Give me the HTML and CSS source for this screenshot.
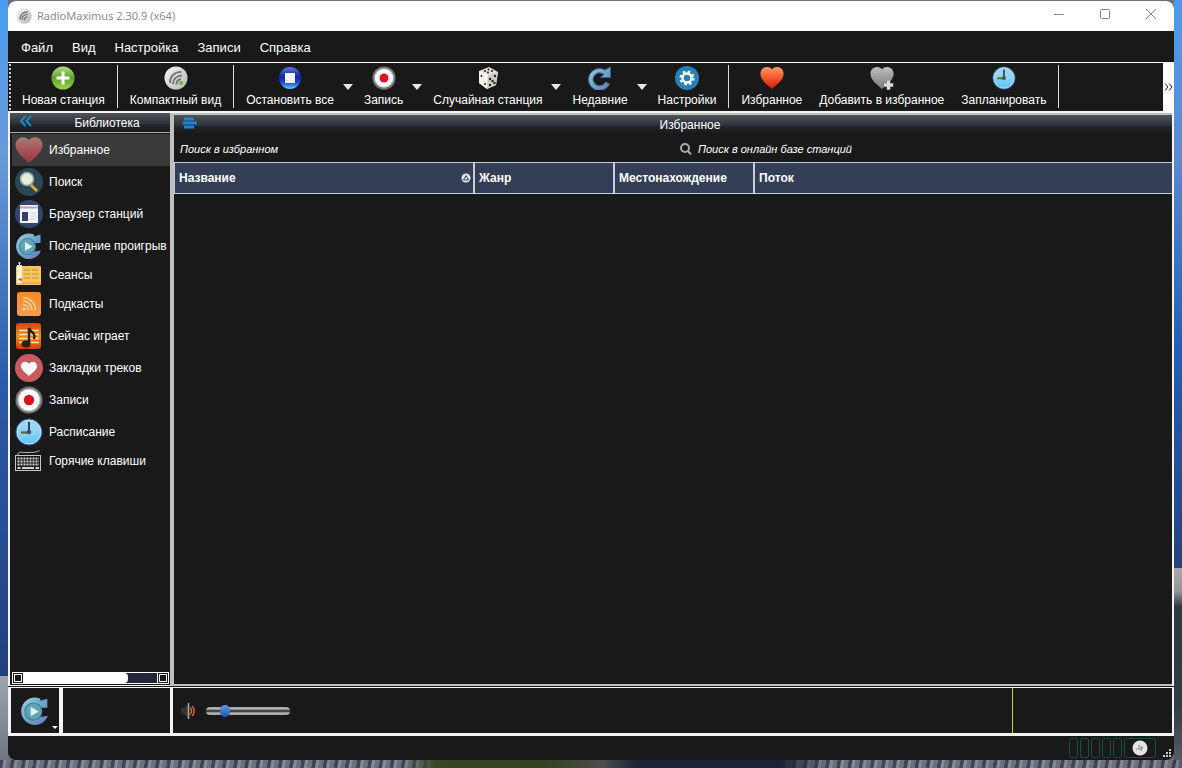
FILE: index.html
```html
<!DOCTYPE html>
<html lang="ru">
<head>
  <meta charset="UTF-8">
  <title>RadioMaximus</title>
  <link rel="stylesheet" href="styles.css">
</head>
<body>
<svg class="defs" aria-hidden="true">
  <defs>
    <linearGradient id="gGreen" x1="0" y1="0" x2="0" y2="1"><stop offset="0" stop-color="#b5dc86"/><stop offset=".5" stop-color="#5ba42c"/><stop offset="1" stop-color="#9bd94c"/></linearGradient>
    <linearGradient id="gSilver" x1="0" y1="0" x2="1" y2="1"><stop offset="0" stop-color="#fafafa"/><stop offset="1" stop-color="#b4b4b4"/></linearGradient>
    <linearGradient id="gBlue" x1="0" y1="0" x2="0" y2="1"><stop offset="0" stop-color="#5a78d8"/><stop offset=".45" stop-color="#1222a0"/><stop offset=".7" stop-color="#1a4ad0"/><stop offset="1" stop-color="#5cd0ff"/></linearGradient>
    <linearGradient id="gSky" x1="0" y1="0" x2="0" y2="1"><stop offset="0" stop-color="#a9d4ee"/><stop offset=".5" stop-color="#8ed2f4"/><stop offset="1" stop-color="#5cc4fa"/></linearGradient>
    <linearGradient id="gRed" x1="0" y1="0" x2="0" y2="1"><stop offset="0" stop-color="#ff9a68"/><stop offset=".5" stop-color="#f4552a"/><stop offset="1" stop-color="#c81c08"/></linearGradient>
    <linearGradient id="gRose" x1="0" y1="0" x2="0" y2="1"><stop offset="0" stop-color="#a87c78"/><stop offset=".5" stop-color="#a85258"/><stop offset="1" stop-color="#96344a"/></linearGradient>
    <linearGradient id="gGray" x1="0" y1="0" x2="0" y2="1"><stop offset="0" stop-color="#bcbcbc"/><stop offset="1" stop-color="#7c7c7c"/></linearGradient>
    <linearGradient id="gSteel" x1="0" y1="0" x2="1" y2="1"><stop offset="0" stop-color="#9fd0dc"/><stop offset=".5" stop-color="#6aa6cc"/><stop offset="1" stop-color="#6c7cb8"/></linearGradient>
    <linearGradient id="gOrange" x1="0" y1="0" x2="0" y2="1"><stop offset="0" stop-color="#f58a22"/><stop offset="1" stop-color="#fb9a50"/></linearGradient>
    <linearGradient id="gFire" x1="0" y1="0" x2="0" y2="1"><stop offset="0" stop-color="#d8440c"/><stop offset=".5" stop-color="#f88a1c"/><stop offset="1" stop-color="#d43c08"/></linearGradient>
  </defs>
  <symbol id="heart" viewBox="0 0 28 28"><path d="M14 27C11 23.500 0 17 0.500 8.500C1 1 10-1 14 4C18-1 27 1 27.500 8.500C28 17 17 23.500 14 27Z"/></symbol>
  <symbol id="radio" viewBox="0 0 24 24">
    <circle cx="12" cy="12" r="11.500" fill="url(#gSilver)"/>
    <path d="M6 17C6 10 11 5.500 17.500 6M9 18C9 13 12.500 9.500 18 9.500M12.500 18.500C12.500 15.500 14 13.500 17 13" fill="none" stroke="#777" stroke-width="2"/>
  </symbol>
  <symbol id="record" viewBox="0 0 28 28">
    <circle cx="14" cy="14" r="13.500" fill="#777"/><circle cx="14" cy="14" r="11.500" fill="#b8b8b8"/><circle cx="14" cy="14" r="10.500" fill="#fff"/><circle cx="14" cy="14" r="5.200" fill="#d8141c"/>
  </symbol>
  <symbol id="clock" viewBox="0 0 28 28">
    <circle cx="14" cy="14" r="13.500" fill="#285a88"/><circle cx="14" cy="14" r="12" fill="url(#gSky)" stroke="#c4e8fa"/>
    <path d="M14 4V14" stroke="#2c4456" stroke-width="2"/><path d="M6 14.500H14" stroke="#5c6428" stroke-width="2.200"/><circle cx="14" cy="14" r="2.200" fill="#31536c"/>
  </symbol>
  <symbol id="replay" viewBox="0 0 28 28">
    <path d="M19 4.500L25.500 2.500V11H16L18.500 9.500A7 7 0 1 0 19 19.500L26 18.500A12.800 12.800 0 1 1 19 2.500Z" fill="url(#gSteel)"/>
    <circle cx="12.500" cy="14.500" r="8" fill="#5fa3b5" stroke="#3c7c98"/><path d="M10 10L17.500 14.500L10 19Z" fill="#dff4f8"/>
  </symbol>
</svg>

<div class="window">
  <div class="titlebar">
    <svg class="logo"><use href="#radio"/></svg>
    <span class="title">RadioMaximus 2.30.9 (x64)</span>
    <button class="win-btn" aria-label="Свернуть"><svg viewBox="0 0 12 12"><path d="M1 6.500H11"/></svg></button>
    <button class="win-btn" aria-label="Развернуть"><svg viewBox="0 0 12 12"><rect x="1.500" y="1.500" width="9" height="9" rx="1"/></svg></button>
    <button class="win-btn" aria-label="Закрыть"><svg viewBox="0 0 12 12"><path d="M1 1L11 11M11 1L1 11"/></svg></button>
  </div>

  <div class="menubar">
    <button>Файл</button>
    <button>Вид</button>
    <button>Настройка</button>
    <button>Записи</button>
    <button>Справка</button>
  </div>

  <div class="toolbar">
    <span class="handle"></span>
    <button class="tool">
      <svg viewBox="0 0 24 24"><circle cx="12" cy="12" r="11.500" fill="url(#gGreen)"/><path d="M12 5.500V18.500M5.500 12H18.500" stroke="#fff" stroke-width="3"/></svg>
      Новая станция
    </button>
    <span class="sep"></span>
    <button class="tool">
      <svg viewBox="0 0 24 24"><use href="#radio"/><circle cx="17" cy="17" r="2" fill="#6bb548"/></svg>
      Компактный вид
    </button>
    <span class="sep"></span>
    <button class="tool">
      <svg viewBox="0 0 24 24"><circle cx="12" cy="12" r="11" fill="url(#gBlue)"/><rect x="7" y="7" width="10" height="10" fill="#f4f6ff"/></svg>
      Остановить все
    </button>
    <button class="drop" aria-label="Остановить"></button>
    <button class="tool">
      <svg><use href="#record"/></svg>
      Запись
    </button>
    <button class="drop" aria-label="Варианты записи"></button>
    <button class="tool">
      <svg viewBox="0 0 24 24">
        <path d="M3 5L13 1L22 6L20 19L11 23L3 17Z" fill="#e4e0da"/><path d="M3 5L12 9L11 23L3 17Z" fill="#f6f4f0"/><path d="M12 9L22 6L20 19L11 23Z" fill="#cfcac2"/>
        <g fill="#222"><circle cx="9" cy="5" r="1"/><circle cx="12.500" cy="3.500" r="1"/><circle cx="12" cy="6.500" r="1"/><circle cx="16" cy="5" r="1"/><circle cx="5.500" cy="10" r="1"/><circle cx="9" cy="18" r="1"/><circle cx="14" cy="13" r="1.200"/><circle cx="19" cy="10" r="1.200"/><circle cx="16.500" cy="15" r="1.200"/><circle cx="14" cy="19" r="1.200"/><circle cx="18.500" cy="17" r="1.200"/></g>
      </svg>
      Случайная станция
    </button>
    <button class="drop" aria-label="Варианты станций"></button>
    <button class="tool">
      <svg viewBox="0 0 24 24"><path d="M17 4L22.500 1V11.500H12.500L16 8.500A6.500 6.500 0 1 0 17.500 16L21.500 18A11 11 0 1 1 17 4Z" fill="url(#gSteel)" stroke="#47628a"/></svg>
      Недавние
    </button>
    <button class="drop" aria-label="Список недавних"></button>
    <button class="tool">
      <svg viewBox="0 0 24 24"><circle cx="12" cy="12" r="12" fill="#2780b8"/><circle cx="12" cy="12" r="6.300" fill="none" stroke="#fff" stroke-width="2.500" stroke-dasharray="2.500 2.450"/><circle cx="12" cy="12" r="4.500" fill="none" stroke="#fff" stroke-width="2.400"/></svg>
      Настройки
    </button>
    <span class="sep"></span>
    <button class="tool">
      <svg fill="url(#gRed)"><use href="#heart"/></svg>
      Избранное
    </button>
    <button class="tool">
      <svg viewBox="0 0 24 24" fill="url(#gGray)"><use href="#heart"/><path d="M18.500 14V24M13.500 19H23.500" stroke="#777" stroke-width="4"/><path d="M18.500 14.500V23.500M14 19H23" stroke="#ddd" stroke-width="3"/></svg>
      Добавить в избранное
    </button>
    <button class="tool">
      <svg><use href="#clock"/></svg>
      Запланировать
    </button>
    <span class="sep"></span>
    <button class="more" aria-label="Ещё"><svg viewBox="0 0 9 8"><path d="M1 0.500L4 4L1 7.500M5 0.500L8 4L5 7.500"/></svg></button>
  </div>

  <div class="workspace">
    <div class="sidebar">
      <div class="panel-head">
        <button class="head-icon" aria-label="Скрыть панель"><svg viewBox="0 0 14 12"><path d="M6.500 1L2 6L6.500 11M12 1L7.500 6L12 11"/></svg></button>
        <span>Библиотека</span>
      </div>
      <ul class="library">
        <li class="current"><a href="#"><svg fill="url(#gRose)"><use href="#heart"/></svg>Избранное</a></li>
        <li><a href="#">
          <svg viewBox="0 0 28 28"><circle cx="14" cy="14" r="14" fill="#2c4655"/><path d="M16 17L22 23" stroke="#e0a83c" stroke-width="3"/><circle cx="12" cy="11" r="6.500" fill="#e6ecd8" stroke="#93a8a4" stroke-width="1.500"/></svg>
          Поиск</a></li>
        <li><a href="#">
          <svg viewBox="0 0 28 28"><circle cx="14" cy="14" r="14" fill="#34466e"/><rect x="5" y="5" width="18" height="18" rx="1" fill="#f4f4fc"/><path d="M5 7.500H23" stroke="#b8a4b8" stroke-width="2"/><rect x="7" y="12" width="6" height="9" fill="#34406c"/><path d="M15 13H21M15 16H21M15 19H21" stroke="#cdd0e4"/></svg>
          Браузер станций</a></li>
        <li><a href="#"><svg><use href="#replay"/></svg>Последние проигрыв</a></li>
        <li class="short"><a href="#">
          <svg viewBox="0 0 28 28"><rect x="1" y="5" width="25" height="19" rx="1" fill="#fbc45a"/><rect x="2" y="4" width="5" height="18" fill="#fff4e0"/><path d="M4.500 1V6M3 2H6" stroke="#ccc"/><path d="M4 18L7 19" stroke="#d44" stroke-width="2"/><path d="M9 9H15M9 13H15M9 17H15M17 9H23M17 13H23M17 17H23" stroke="#b8923c"/><path d="M7 22H26" stroke="#e09c34"/></svg>
          Сеансы</a></li>
        <li><a href="#">
          <svg viewBox="0 0 28 28"><rect x="2" y="2" width="24" height="24" rx="3" fill="url(#gOrange)"/><path d="M8 11A9 9 0 0 1 17 20M8 7.500A12.500 12.500 0 0 1 20.500 20M8 14.500A5.500 5.500 0 0 1 13.500 20" fill="none" stroke="#fcd8a8" stroke-width="1.400"/><circle cx="9" cy="19" r="1.500" fill="#fcd8a8"/></svg>
          Подкасты</a></li>
        <li><a href="#">
          <svg viewBox="0 0 28 28"><rect x="1" y="1" width="25" height="26" rx="3" fill="url(#gFire)"/><path d="M4 8.500H24M4 12.500H24M4 16.500H24M4 20.500H24" stroke="#ffe4b0" stroke-width="1.500"/><path d="M14 22V6C16 11 21 10 19 17" fill="none" stroke="#301c10" stroke-width="2.500"/><ellipse cx="11" cy="22" rx="4.500" ry="3.500" fill="#301c10"/></svg>
          Сейчас играет</a></li>
        <li><a href="#">
          <svg viewBox="0 0 28 28"><circle cx="14" cy="14" r="14" fill="#c85a60"/><path d="M14 22C12 19.500 5.500 16 6 11.500C6.500 7 12 6.500 14 10C16 6.500 21.500 7 22 11.500C22.500 16 16 19.500 14 22Z" fill="#fff"/></svg>
          Закладки треков</a></li>
        <li><a href="#"><svg><use href="#record"/></svg>Записи</a></li>
        <li><a href="#"><svg><use href="#clock"/></svg>Расписание</a></li>
        <li class="short"><a href="#">
          <svg viewBox="0 0 28 28"><path d="M3 8C3 4 5 5.500 12 5.500S24 5 24.500 3" fill="none" stroke="#bbb"/><rect x="0.500" y="8.500" width="25" height="15" fill="#1a1a1a" stroke="#c8c8c8"/><path d="M2.500 11.500H24M2.500 14.500H24M2.500 17.500H24" stroke="#d4d4d4" stroke-width="2" stroke-dasharray="2 1"/><path d="M2.500 21H5.500M7 21H19M20.500 21H24" stroke="#d4d4d4" stroke-width="2"/></svg>
          Горячие клавиши</a></li>
      </ul>
      <div class="scrollbar">
        <button aria-label="Влево"></button>
        <div class="track"><div class="thumb"></div></div>
        <button aria-label="Вправо"></button>
      </div>
    </div>

    <div class="content">
      <div class="panel-head">
        <button class="head-icon" aria-label="Меню"><svg viewBox="0 0 14 12"><path d="M1 2H11M0 6H14M1 10H11"/></svg></button>
        <span>Избранное</span>
      </div>
      <div class="search">
        <input type="text" placeholder="Поиск в избранном" aria-label="Поиск в избранном">
        <label>
          <svg viewBox="0 0 12 12"><circle cx="5" cy="5" r="4"/><path d="M8 8L11 11.500"/></svg>
          <input type="text" placeholder="Поиск в онлайн базе станций" aria-label="Поиск в онлайн базе станций">
        </label>
      </div>
      <table class="stations">
        <thead>
          <tr>
            <th class="name"><div>Название <svg viewBox="0 0 10 10"><circle cx="5" cy="5" r="4.500" fill="#e4e8ee"/><path d="M5 2.500L7.500 7H2.500Z" fill="none" stroke="#343f57"/></svg></div></th>
            <th class="mid">Жанр</th>
            <th class="mid">Местонахождение</th>
            <th>Поток</th>
          </tr>
        </thead>
        <tbody></tbody>
      </table>
    </div>
  </div>

  <div class="player">
    <button class="play" aria-label="Воспроизвести"><svg><use href="#replay"/></svg></button>
    <div class="track-info"></div>
    <div class="volume">
      <svg viewBox="0 0 16 18"><path d="M1 6H4L8 2V16L4 12H1Z" fill="#3c3430"/><path d="M8.500 1V17" stroke="#a8a8a8" stroke-width="1.500"/><path d="M10 5.500C12 7.500 12 10.500 10 12.500M12 4C15 6.500 15 11.500 12 14" fill="none" stroke="#d8642c" stroke-width="1.500"/></svg>
      <input type="range" min="0" max="100" value="19" aria-label="Громкость">
    </div>
    <div class="visual"></div>
  </div>

  <div class="statusbar">
    <span class="cell"></span><span class="cell"></span><span class="cell"></span><span class="cell"></span><span class="cell"></span>
    <span class="cell wide"><svg viewBox="0 0 16 16"><circle cx="8" cy="8" r="7.500" fill="#e4e4e4"/><path d="M4 10L5.500 8L7 10V5L9.500 11V6L11 9" fill="none" stroke="#999"/></svg></span>
    <svg class="grip" viewBox="0 0 9 9"><path d="M6 0h2v2h-2zM3 3h2v2h-2zM6 3h2v2h-2zM0 6h2v2h-2zM3 6h2v2h-2zM6 6h2v2h-2z"/></svg>
  </div>
</div>
</body>
</html>
```
FILE: styles.css
```css
* {
  margin: 0;
  padding: 0;
  box-sizing: border-box;
}

/* desktop: sky on both sides, city along the bottom */
body {
  height: 100vh;
  padding: 1px 8px 8px;
  overflow: hidden;
  font: 12px/16px "Liberation Sans", Arial, sans-serif;
  color: #fff;
  background:
    linear-gradient(90deg, transparent 34%, #3a4524 37%, #34421f 46%, #4a4c50 51%, #1c2138 54%, #1c2138 66%, transparent 70%) 0 100%/100% 8px no-repeat,
    repeating-linear-gradient(100deg, rgba(20, 25, 45, .5) 0 3px, rgba(200, 200, 210, .3) 4px 6px, transparent 7px 11px) 0 100%/100% 8px no-repeat,
    linear-gradient(#4a9cf0, #6a9ad8 20%, #2c5aa8 50%, #22407c 88%, #a0a4ac 88%, #6c707c) 0 0/8px 100% no-repeat,
    linear-gradient(#4a9cf0, #5a8cd0 20%, #2060b8 45%, #26447c 74%, #a8a8ac 74%, #94949a 77%, #2c3a44 79%, #303c48 92%, #5c606c) 100% 0/8px 100% no-repeat,
    #6c707c;
}

button, input {
  font: inherit;
  color: inherit;
  background: none;
  border: 0;
  outline: 0;
}

ul {
  list-style: none;
}

a {
  color: inherit;
  text-decoration: none;
}

.defs {
  position: absolute;
  width: 0;
  height: 0;
}

.window {
  display: flex;
  flex-direction: column;
  height: 100%;
  border-radius: 8px;
  overflow: hidden;
  background: #191919;
}

/* title */
.titlebar {
  display: flex;
  align-items: center;
  height: 30px;
  padding-left: 8px;
  background: #fff;
  color: #8c8c8c;
}

.logo {
  width: 16px;
  height: 16px;
}

.title {
  flex: 1;
  padding-left: 5px;
  font: 11px/16px "Noto Sans", "Open Sans", sans-serif;
}

.win-btn {
  width: 46px;
  height: 28px;
}

.win-btn svg {
  width: 12px;
  height: 12px;
  fill: none;
  stroke: #888;
}

/* menu */
.menubar {
  display: flex;
  gap: 1px;
  height: 31px;
  padding: 3px 4px 0;
  font-size: 13px;
}

.menubar button {
  padding: 0 9px;
}

/* toolbar */
.toolbar {
  display: flex;
  height: 49px;
  border-top: 1px solid #fff;
}

.handle {
  width: 2px;
  margin: 1px 3px 1px 1px;
  border-left: 2px dotted #ccc;
}

.tool {
  display: flex;
  flex-direction: column;
  align-items: center;
  gap: 2px;
  padding: 3px 8px 0;
  margin-right: 1px;
  white-space: nowrap;
}

.tool svg {
  width: 24px;
  height: 24px;
}

.sep {
  width: 1px;
  margin: 2px 4px 3px 3px;
  background: #ddd;
}

.drop {
  width: 9px;
  margin-right: 4px;
}

.drop::before {
  content: "";
  display: block;
  border: 5px solid transparent;
  border-top: 6px solid #e8e8e8;
  border-bottom: 0;
}

.more {
  width: 11px;
  margin-left: auto;
  background: #fff;
}

.more svg {
  width: 9px;
  height: 8px;
  fill: none;
  stroke: #222;
}

/* panels */
.workspace {
  display: flex;
  flex: 1;
  min-height: 0;
  padding: 0 2px;
  background: #f4f4f4;
}

.sidebar {
  display: flex;
  flex-direction: column;
  width: 160px;
  margin: 2px 0 1px;
  background: #191919;
}

.content {
  flex: 1;
  min-width: 0;
  margin-top: 2px;
  border: solid #c0c0c0;
  border-width: 2px 0 2px 4px;
  background: #191919;
}

.panel-head {
  display: flex;
  align-items: center;
  height: 20px;
  border-bottom: 1px solid #191919;
  background: linear-gradient(#505358, #33373e 45%, #2c3548 52%, #22252b 62%, #191919);
}

.panel-head span {
  flex: 1;
  padding-left: 2px;
  text-align: center;
}

.sidebar .panel-head {
  border-color: #a8a8a8;
}

.head-icon {
  width: 32px;
  height: 16px;
}

.head-icon svg {
  width: 14px;
  height: 12px;
  fill: none;
  stroke: #1b87d0;
  stroke-width: 2;
}

.content .head-icon svg {
  stroke-width: 3;
}

.library {
  flex: 1;
  padding: 1px 0 0 2px;
  overflow: hidden;
  white-space: nowrap;
}

.library a {
  display: flex;
  align-items: center;
  gap: 6px;
  height: 32px;
  padding-left: 3px;
}

.library .short a {
  height: 26px;
}

.library .current {
  background: #3a3a3a;
}

.library svg {
  flex: none;
  width: 28px;
  height: 28px;
}

.scrollbar {
  display: flex;
  height: 12px;
  margin: 0 1px 1px 2px;
  border: 1px solid #fff;
}

.scrollbar button {
  display: flex;
  align-items: center;
  justify-content: center;
  width: 10px;
}

.scrollbar button::before {
  content: "";
  width: 6px;
  height: 6px;
  border: 1px solid #fff;
}

.track {
  flex: 1;
  border: solid #fff;
  border-width: 0 1px;
  background: #23263a;
}

.thumb {
  width: 78%;
  height: 100%;
  border-radius: 0 4px 4px 0;
  background: #fff;
}

.search {
  display: flex;
  height: 27px;
  font: italic 11px/16px "Liberation Sans", Arial, sans-serif;
}

.search > * {
  flex: 1;
  padding-left: 6px;
}

.search label {
  display: flex;
  align-items: center;
  gap: 6px;
  padding-left: 8px;
}

.search label input {
  flex: 1;
}

.search svg {
  width: 12px;
  height: 12px;
  fill: none;
  stroke: #aaa;
  stroke-width: 2;
}

::placeholder {
  color: #fff;
  opacity: 1;
}

.stations {
  width: 100%;
  table-layout: fixed;
  border-collapse: separate;
  border-spacing: 0;
}

.stations th {
  height: 32px;
  padding: 0 4px;
  border: solid #c8ccd4;
  border-width: 1px 2px 1px 0;
  background: #343f57;
  text-align: left;
}

.stations th:first-child {
  border-left-width: 1px;
}

.stations th:last-child {
  border-right: 0;
}

.stations .name {
  width: 301px;
  padding-right: 2px;
}

.stations .name div {
  display: flex;
  align-items: center;
  justify-content: space-between;
}

.stations .name svg {
  width: 10px;
  height: 10px;
}

.stations .mid {
  width: 140px;
}

/* player */
.player {
  display: flex;
  height: 50px;
  padding: 1px 2px 3px 3px;
  border-top: 1px solid #191919;
  background: #f4f4f4;
}

.player > * {
  background: #191919;
}

.play {
  display: flex;
  align-items: center;
  justify-content: center;
  width: 48px;
  margin-right: 4px;
}

.play svg {
  width: 30px;
  height: 30px;
}

.play::after {
  content: "";
  align-self: flex-end;
  margin: 0 -8px 4px 2px;
  border: 3px solid transparent;
  border-top-color: #fff;
  border-bottom: 0;
}

.track-info {
  width: 107px;
  margin-right: 3px;
}

.volume {
  display: flex;
  flex: 1;
  align-items: center;
  gap: 10px;
  padding-left: 7px;
}

.volume svg {
  width: 16px;
  height: 18px;
}

.volume input {
  width: 84px;
  height: 12px;
  appearance: none;
}

.volume input::-webkit-slider-runnable-track {
  height: 8px;
  border-radius: 4px;
  background: linear-gradient(#999, #c0c0c0 25%, #444 40%, #444 60%, #c0c0c0 75%, #999);
}

.volume input::-webkit-slider-thumb {
  appearance: none;
  width: 10px;
  height: 12px;
  margin-top: -2px;
  border-radius: 5px;
  background: linear-gradient(#5a9ae0, #2458b0);
}

.visual {
  width: 160px;
  border-left: 1px solid #c8d820;
}

/* status */
.statusbar {
  display: flex;
  justify-content: flex-end;
  align-items: center;
  gap: 2px;
  height: 24px;
  padding-right: 2px;
}

.cell {
  width: 9px;
  height: 20px;
  border: 1px solid #1c4c42;
  border-radius: 2px;
}

.wide {
  display: flex;
  align-items: center;
  justify-content: center;
  width: 32px;
}

.wide svg {
  width: 16px;
  height: 16px;
}

.grip {
  align-self: flex-end;
  width: 9px;
  height: 9px;
  margin: 0 0 2px 5px;
  fill: #ccc;
}
```
